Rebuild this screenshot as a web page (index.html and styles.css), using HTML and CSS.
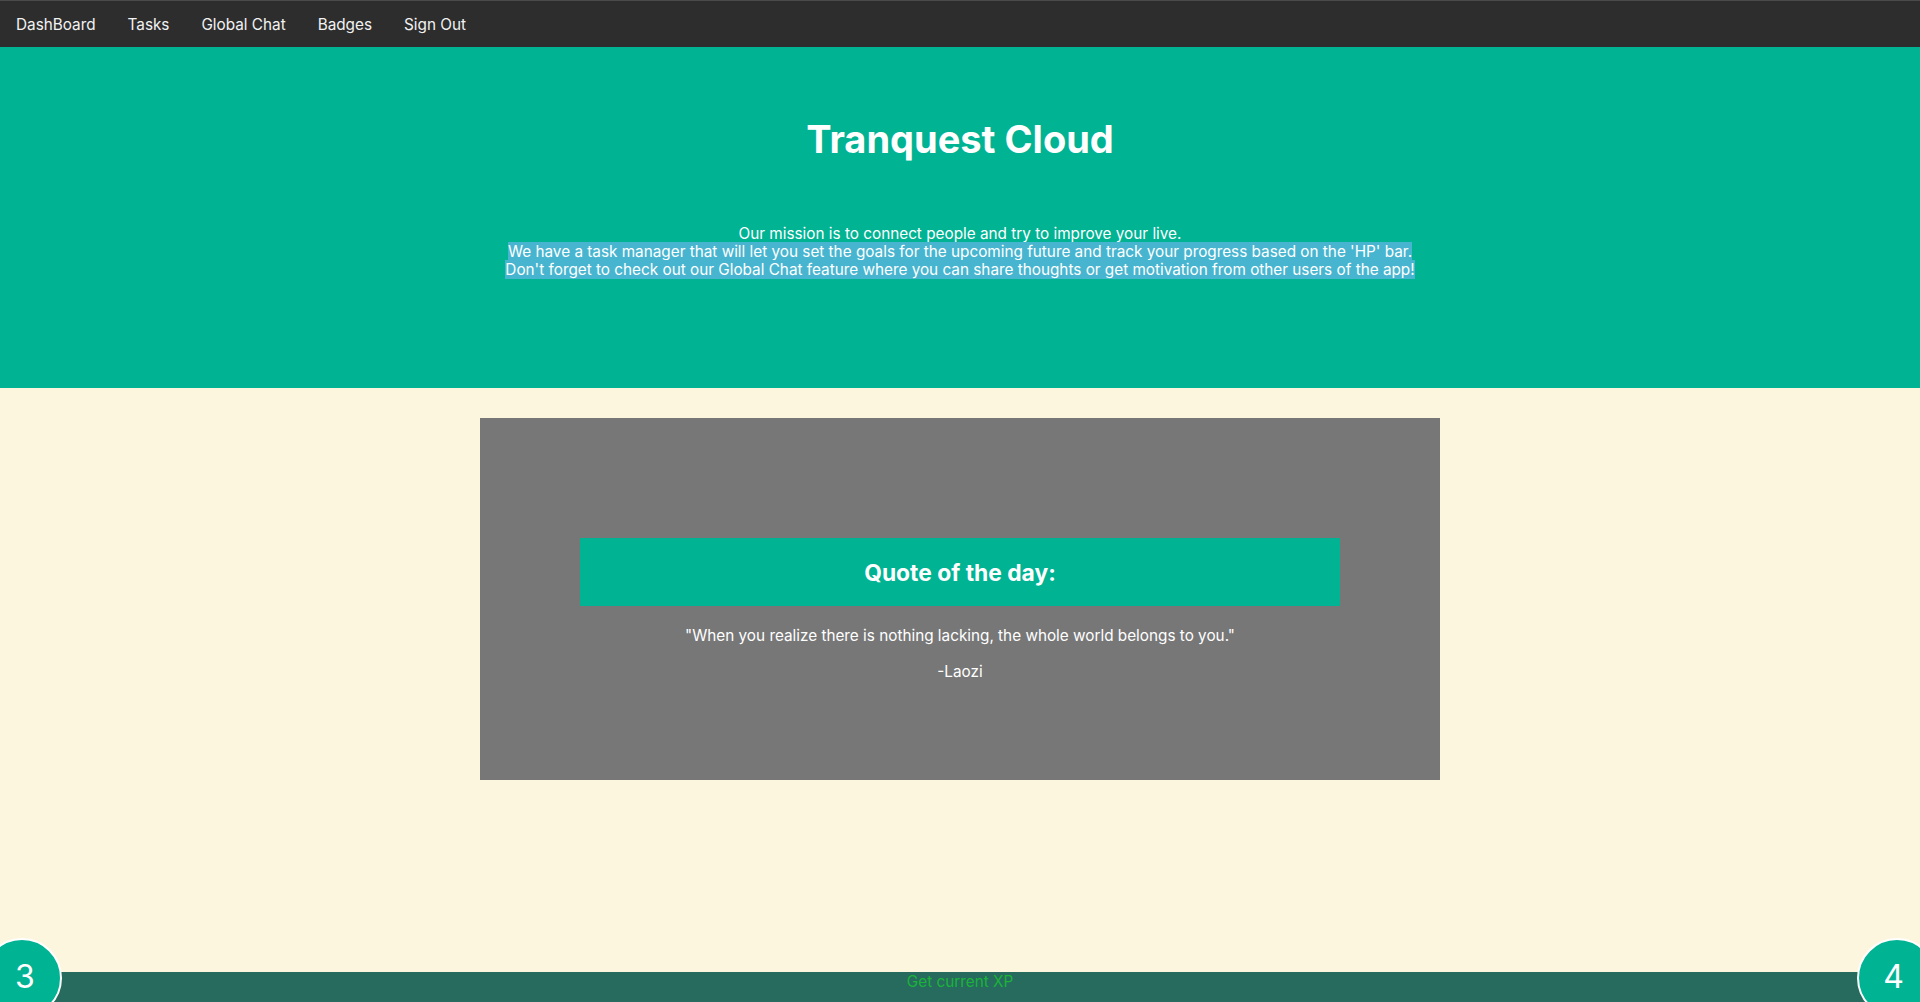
FILE: index.html
```html
<!DOCTYPE html>
<html lang="en">
<head>
<meta charset="utf-8">
<title>Tranquest Cloud</title>
<link rel="stylesheet" href="styles.css">
</head>
<body>
<nav class="topnav">
  <a href="#">DashBoard</a>
  <a href="#">Tasks</a>
  <a href="#">Global Chat</a>
  <a href="#">Badges</a>
  <a href="#">Sign Out</a>
</nav>
<header class="hero">
  <h1 class="hero-title">Tranquest Cloud</h1>
  <p class="hero-text">Our mission is to connect people and try to improve your live.<br><span class="sel">We have a task manager that will let you set the goals for the upcoming future and track your progress based on the 'HP' bar.</span><br><span class="sel">Don't forget to check out our Global Chat feature where you can share thoughts or get motivation from other users of the app!</span></p>
</header>
<main class="content">
  <section class="quote-box">
    <h2 class="quote-title">Quote of the day:</h2>
    <p class="quote-text">"When you realize there is nothing lacking, the whole world belongs to you."</p>
    <p class="quote-author">-Laozi</p>
  </section>
</main>
<footer class="xp-bar">
  <span class="level level-left">3</span>
  <span class="xp-text">Get current XP</span>
  <span class="level level-right">4</span>
</footer>
</body>
</html>
```
FILE: styles.css
```css
* { box-sizing: border-box; }
html, body { margin: 0; padding: 0; }
body {
  font-family: Inter, "Noto Sans", sans-serif;
  background: #fdf6df;
  color: #fff;
  height: 1002px;
  overflow: hidden;
}
.topnav {
  display: flex;
  height: 47px;
  background: #2d2d2d;
  border-top: 1px solid #4a4a4a;
  align-items: center;
}
.topnav a {
  color: #f2f2f2;
  text-decoration: none;
  font-size: 15.3px;
  padding: 2px 16px 0;
  line-height: 44px;
}
.hero {
  background: #00b393;
  height: 341px;
  padding-top: 69px;
  text-align: center;
}
.hero-title {
  margin: 0;
  font-size: 38px;
  font-weight: 700;
  line-height: 46px;
}
.hero-text {
  margin: 63px 0 0;
  font-size: 15.3px;
  line-height: 18px;
}
.sel { background: #47b5cf; }
.content {
  padding-top: 30px;
}
.quote-box {
  width: 960px;
  height: 362px;
  margin: 0 auto;
  background: #777777;
  padding-top: 120px;
  text-align: center;
}
.quote-title {
  width: 760px;
  height: 68px;
  margin: 0 auto;
  background: #00b393;
  font-size: 22.8px;
  font-weight: 700;
  display: flex;
  align-items: center;
  justify-content: center;
}
.quote-text, .quote-author {
  font-size: 15.3px;
  margin: 20px 0 0;
  line-height: 20px;
}
.quote-author { margin-top: 16px; }
.xp-bar {
  position: fixed;
  left: 0;
  right: 0;
  bottom: 0;
  height: 30px;
  background: #266b5d;
  display: flex;
  justify-content: center;
}
.xp-text {
  color: #1bb33a;
  font-size: 15.3px;
  line-height: 20px;
}
.level {
  position: absolute;
  top: -34px;
  width: 80px;
  height: 80px;
  border-radius: 50%;
  background: #00b393;
  border: 2px solid #fff;
  color: #fff;
  font-size: 32px;
  display: flex;
  justify-content: center;
  padding-top: 21px;
  line-height: 1;
}
.level-left { left: -18px; padding-left: 6px; }
.level-right { right: -17px; padding-right: 7px; }
```
